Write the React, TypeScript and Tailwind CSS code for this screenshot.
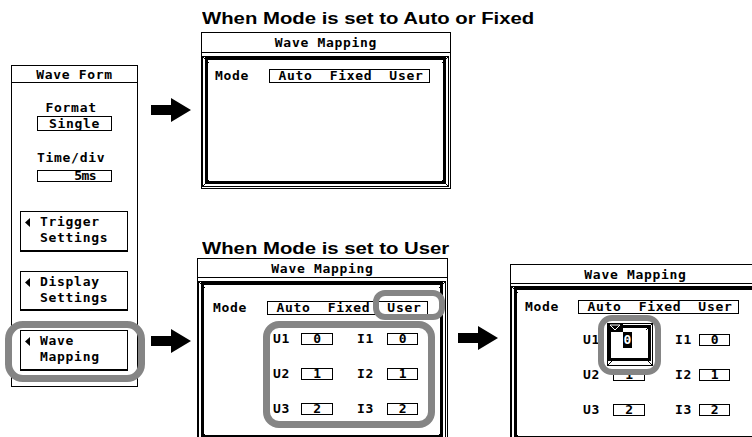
import React from "react";

const mono =
  "font-['DejaVu_Sans_Mono',monospace] font-bold text-[13px] tracking-[0.7px] text-black";
const heading =
  "font-['Liberation_Sans',Arial,sans-serif] font-bold text-[16px] leading-[18px] whitespace-nowrap origin-left scale-x-[1.27] text-black";
const ring = "absolute border-[#858585]";

function Arrow() {
  return (
    <svg width="40" height="24" viewBox="0 0 40 24" className="block">
      <polygon points="0,7 20,7 20,0 40,12 20,24 20,17 0,17" fill="black" />
    </svg>
  );
}

function Bevel({
  className,
  innerClassName,
  children,
}: {
  className: string;
  innerClassName: string;
  children?: React.ReactNode;
}) {
  return (
    <div className={`relative flex flex-col border border-black ${className}`}>
      <svg className="absolute left-0 top-0 w-[6px] h-[6px]" viewBox="0 0 6 6">
        <line x1="0" y1="0" x2="6" y2="6" stroke="black" strokeWidth="1" />
      </svg>
      <svg className="absolute right-0 top-0 w-[6px] h-[6px]" viewBox="0 0 6 6">
        <line x1="6" y1="0" x2="0" y2="6" stroke="black" strokeWidth="1" />
      </svg>
      <svg className="absolute left-0 bottom-0 w-[6px] h-[6px]" viewBox="0 0 6 6">
        <line x1="0" y1="6" x2="6" y2="0" stroke="black" strokeWidth="1" />
      </svg>
      <svg className="absolute right-0 bottom-0 w-[6px] h-[6px]" viewBox="0 0 6 6">
        <line x1="6" y1="6" x2="0" y2="0" stroke="black" strokeWidth="1" />
      </svg>
      <div className={`relative flex-1 border-[3px] border-black ${innerClassName}`}>{children}</div>
    </div>
  );
}

function MapPanel({
  className,
  headerClass,
  bevelClass,
  contentClass,
  children,
}: {
  className: string;
  headerClass: string;
  bevelClass: string;
  contentClass: string;
  children?: React.ReactNode;
}) {
  return (
    <div className={`flex flex-col border border-black bg-white shrink-0 ${className}`}>
      <div
        className={`${headerClass} shrink-0 border-b border-black flex items-center justify-center leading-[15px] ${mono}`}
      >
        Wave Mapping
      </div>
      <Bevel className={bevelClass} innerClassName={contentClass}>
        {children}
      </Bevel>
    </div>
  );
}

function ModeRow({ labelW }: { labelW: string }) {
  return (
    <div className={`flex items-center ${mono}`}>
      <span className={`${labelW} leading-[14px]`}>Mode</span>
      <div className="w-[161px] h-[14px] border border-black flex items-end whitespace-pre leading-[13px] overflow-hidden">
        {" Auto  Fixed  User"}
      </div>
    </div>
  );
}

function ValBox({ w, v }: { w: string; v: string }) {
  return (
    <div
      className={`${w} h-[12px] border border-black flex items-center justify-center leading-[10px] pl-[1px]`}
    >
      {v}
    </div>
  );
}

function Grid({
  className,
  uW,
  gapW,
  iW,
  hideFirst,
}: {
  className: string;
  uW: string;
  gapW: string;
  iW: string;
  hideFirst?: boolean;
}) {
  const rows = ["1", "2", "3"];
  return (
    <div className={`flex flex-col gap-[23px] ${mono} ${className}`}>
      {rows.map((n, i) => (
        <div key={n} className="flex items-center h-[12px]">
          <span className={`${uW} leading-[12px]`}>U{n}</span>
          <ValBox w="w-[32px]" v={hideFirst && i === 0 ? "" : String(i)} />
          <span className={gapW} />
          <span className={`${iW} leading-[12px]`}>I{n}</span>
          <ValBox w="w-[31px]" v={String(i)} />
        </div>
      ))}
    </div>
  );
}

function Tri() {
  return (
    <svg width="5" height="9" viewBox="0 0 5 9" className="block shrink-0">
      <polygon points="5,0 5,9 0,4.5" fill="black" />
    </svg>
  );
}

function SoftKey({ l1, l2, className }: { l1: string; l2: string; className: string }) {
  return (
    <div
      className={`ml-[8px] w-[108px] border border-black border-b-2 pt-[2px] flex flex-col ${className}`}
    >
      <div className="flex items-center h-[16px] pl-[4px]">
        <Tri />
        <span className="ml-[10px] leading-[16px]">{l1}</span>
      </div>
      <div className="h-[16px] pl-[19px] leading-[16px]">{l2}</div>
    </div>
  );
}

function WaveForm() {
  return (
    <div className={`w-[127px] h-[322px] border border-black bg-white flex flex-col ${mono}`}>
      <div className="h-[17px] shrink-0 border-b border-black flex items-center justify-center leading-[15px]">
        Wave Form
      </div>
      <div className="pl-[25px] mt-[17px] leading-[15px] whitespace-pre">{" Format"}</div>
      <div className="ml-[25px] mt-[1px] w-[75px] h-[15px] border border-black flex items-center justify-center leading-[13px]">
        Single
      </div>
      <div className="pl-[25px] mt-[19px] leading-[15px]">Time/div</div>
      <div className="ml-[25px] mt-[5px] w-[75px] h-[12px] border border-black flex items-center justify-end pr-[15px] leading-[10px] tracking-[-0.6px]">
        5ms
      </div>
      <SoftKey l1="Trigger" l2="Settings" className="mt-[29px] h-[41px]" />
      <SoftKey l1="Display" l2="Settings" className="mt-[19px] h-[40px]" />
      <SoftKey l1="Wave" l2="Mapping" className="mt-[19px] h-[41px]" />
    </div>
  );
}

export default function App() {
  return (
    <div className="relative w-[752px] h-[437px] overflow-hidden bg-white flex items-start">
      {/* Left menu */}
      <div className="ml-[11px] mt-[65px] shrink-0">
        <WaveForm />
      </div>

      {/* Arrows column */}
      <div className="w-[59px] shrink-0 flex flex-col pl-[13px]">
        <div className="mt-[98px]">
          <Arrow />
        </div>
        <div className="mt-[207px]">
          <Arrow />
        </div>
      </div>

      {/* Middle column */}
      <div className="w-[261px] shrink-0 flex flex-col">
        <div className={`mt-[10px] ml-[5px] ${heading}`}>When Mode is set to Auto or Fixed</div>
        <div className="mt-[4px] ml-[4px]">
          <MapPanel
            className="w-[250px] h-[157px]"
            headerClass="h-[20px]"
            bevelClass="flex-1 mt-[3px] mr-[1px] mb-[1px] px-[2px] pb-[2px]"
            contentClass="pl-[7px] pt-[9px]"
          >
            <ModeRow labelW="w-[54px]" />
          </MapPanel>
        </div>
        <div className={`mt-[51px] ml-[5px] ${heading}`}>When Mode is set to User</div>
        <MapPanel
          className="w-[251px] h-[185px]"
          headerClass="h-[19px]"
          bevelClass="flex-1 mt-[3px] mr-[1px] mb-[1px] px-[2px] pb-[2px]"
          contentClass="pl-[9px] pt-[16px]"
        >
          <ModeRow labelW="w-[54px]" />
          <Grid className="mt-[18px] ml-[60px]" uW="w-[28px]" gapW="w-[24px]" iW="w-[30px]" />
        </MapPanel>
      </div>

      {/* Right column */}
      <div className="shrink-0 flex items-start">
        <div className="mt-[326px]">
          <Arrow />
        </div>
        <div className="ml-[12px] mt-[264px]">
          <MapPanel
            className="w-[251px] h-[180px]"
            headerClass="h-[19px]"
            bevelClass="flex-1 mt-[2px] mr-[1px] mb-[1px] px-[2px] pb-[2px]"
            contentClass="pl-[8px] pt-[10px]"
          >
            <ModeRow labelW="w-[53px]" />
            <Grid
              className="mt-[20px] ml-[58px]"
              uW="w-[30px]"
              gapW="w-[30px]"
              iW="w-[24px]"
              hideFirst
            />
          </MapPanel>
        </div>
      </div>

      {/* Highlight rings (overlays) */}
      <div className={`${ring} left-[5px] top-[321px] w-[140px] h-[61px] border-[7px] rounded-[18px]`} />
      <div className={`${ring} left-[373px] top-[290px] w-[72px] h-[30px] border-[6px] rounded-[12px]`} />
      <div className={`${ring} left-[263px] top-[321px] w-[172px] h-[107px] border-[7px] rounded-[16px]`} />

      {/* Popup editor over U1 */}
      <div className={`${ring} left-[598px] top-[315px] w-[63px] h-[60px] border-[6px] rounded-[14px]`} />
      <div className="absolute left-[607px] top-[323px] w-[46px] h-[43px] bg-white">
        <Bevel className="h-full pt-[1px] pr-[1px] pb-[4px]" innerClassName="">
          <div className="absolute left-[12px] top-[4px] w-[9px] h-[16px] bg-black flex items-center justify-center">
            <span className={`${mono} !text-white tracking-[0px] leading-[12px]`}>0</span>
          </div>
        </Bevel>
        <svg className="absolute left-0 top-0" width="16" height="9" viewBox="0 0 16 9">
          <rect x="0" y="0" width="16" height="9" fill="black" />
          <polygon points="3,2 13,2 8,7" fill="none" stroke="white" strokeWidth="1" />
        </svg>
      </div>
    </div>
  );
}
